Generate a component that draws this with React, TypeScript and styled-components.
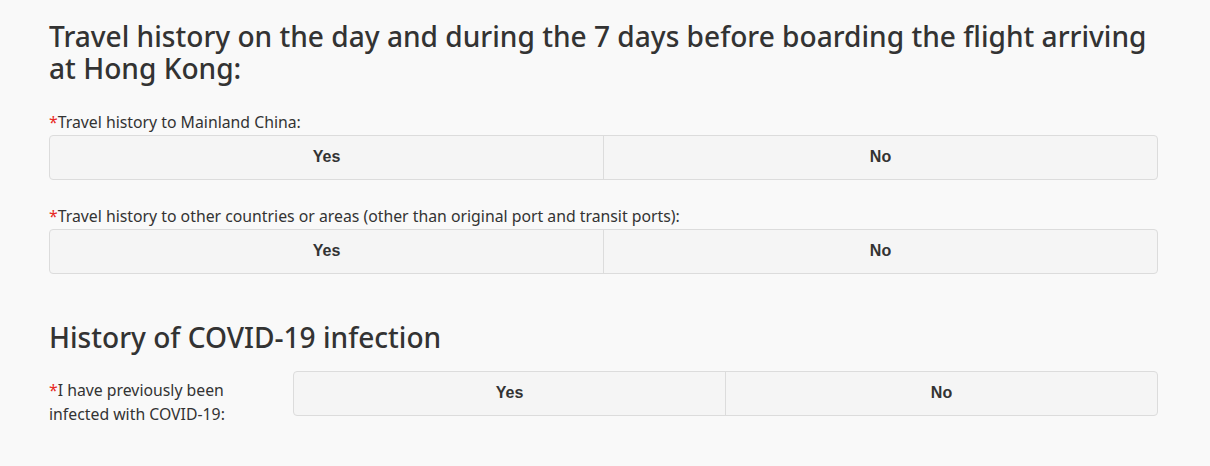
import React from "react";
import styled, { createGlobalStyle } from "styled-components";

const Global = createGlobalStyle`
  body {
    margin: 0;
    background: #f9f9f9;
    font-family: "Noto Sans", "Open Sans", sans-serif;
    color: #333;
  }
`;

const Page = styled.div`
  width: 1109px;
  padding: 20px 0 0 49px;
`;

const Heading = styled.h2<{ $top?: number }>`
  margin: ${({ $top }) => $top ?? 0}px 0 0;
  font-size: 28.1px;
  line-height: 32px;
  font-weight: 500;
  color: #333;
`;

const Field = styled.div<{ $inline?: boolean; $top: number }>`
  margin-top: ${({ $top }) => $top}px;
  display: ${({ $inline }) => ($inline ? "grid" : "block")};
  grid-template-columns: 244px 1fr;
`;

const Label = styled.div<{ $inline?: boolean }>`
  font-size: 15.8px;
  line-height: ${({ $inline }) => ($inline ? "24px" : "20px")};
  margin: ${({ $inline }) => ($inline ? "7px 0 0" : "0 0 3px")};
  color: #333;
`;

const Star = styled.span`
  color: #e8281e;
`;

const Group = styled.div`
  display: flex;
  height: 45px;
  box-sizing: border-box;
  border: 1px solid #dcdcdc;
  border-radius: 4px;
  background: #f5f5f5;
  overflow: hidden;
`;

const Choice = styled.button`
  flex: 1;
  border: 0;
  background: transparent;
  font-family: "Liberation Sans", Arial, sans-serif;
  font-weight: bold;
  font-size: 16px;
  color: #333;
  padding: 0 0 2px;
  cursor: pointer;
  & + & {
    border-left: 1px solid #dcdcdc;
  }
`;

const YesNo = () => (
  <Group>
    <Choice>Yes</Choice>
    <Choice>No</Choice>
  </Group>
);

export default function App() {
  return (
    <Page>
      <Global />
      <Heading>
        Travel history on the day and during the 7 days before boarding the flight arriving at Hong Kong:
      </Heading>
      <Field $top={28}>
        <Label>
          <Star>*</Star>Travel history to Mainland China:
        </Label>
        <YesNo />
      </Field>
      <Field $top={26}>
        <Label>
          <Star>*</Star>Travel history to other countries or areas (other than original port and transit ports):
        </Label>
        <YesNo />
      </Field>
      <Heading $top={47}>History of COVID-19 infection</Heading>
      <Field $inline $top={18}>
        <Label $inline>
          <Star>*</Star>I have previously been
          <br />
          infected with COVID-19:
        </Label>
        <YesNo />
      </Field>
    </Page>
  );
}
